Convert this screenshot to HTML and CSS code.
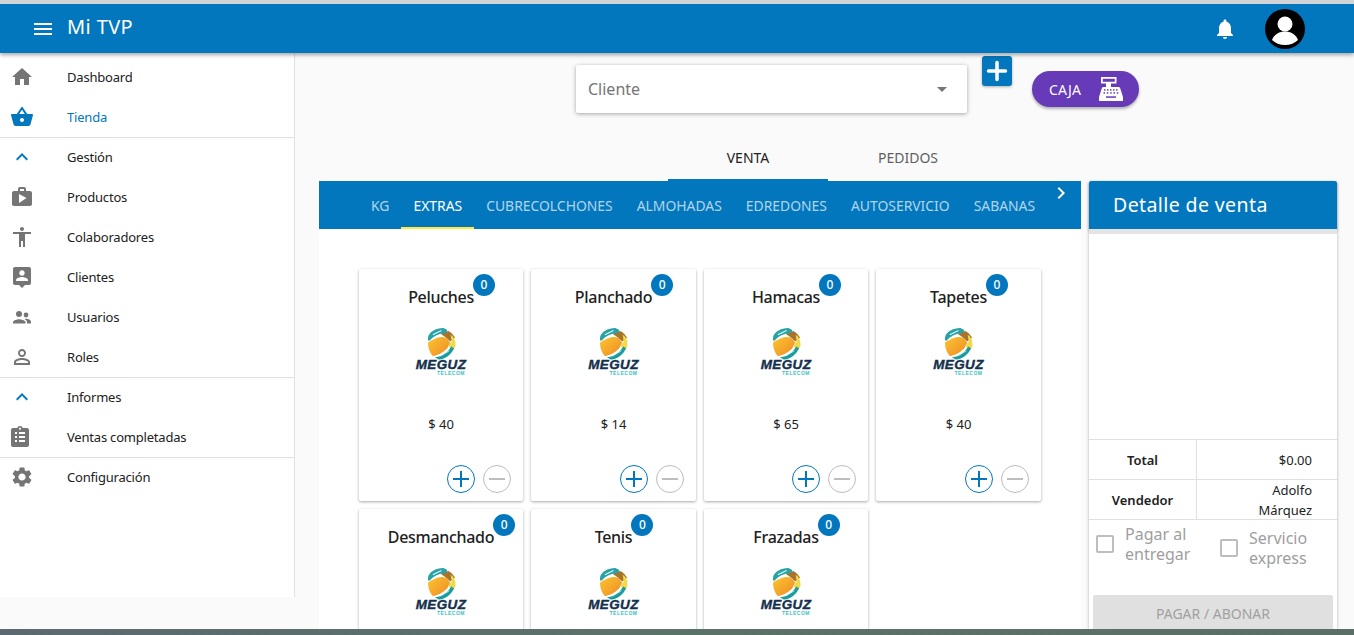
FILE: index.html
```html
<!DOCTYPE html>
<html lang="es">
<head>
<meta charset="utf-8">
<title>Mi TVP</title>
<link rel="stylesheet" href="styles.css">
</head>
<body>
<svg class="defs" width="0" height="0" aria-hidden="true">
  <defs>
    <linearGradient id="gl-orange" x1="0" y1="0" x2="1" y2="1">
      <stop offset="0" stop-color="#fbc531"/>
      <stop offset="1" stop-color="#ef8a25"/>
    </linearGradient>
  </defs>
  <symbol id="globe" viewBox="0 0 30 33">
    <path d="M1 15C8 10 15 8 20 10L24 15 21 21C15 27 9 29 6 29 3 26 1 21 1 15Z" fill="url(#gl-orange)"/>
    <path d="M14 6 22 3C26 5 28 8 29 10L24 14 20 10Z" fill="#a8742c"/>
    <path d="M24.500 7C28 9 29.500 13 29.500 17 29.500 20 27.500 23 25 24L22.500 18 25.500 14Z" fill="#f0d94a"/>
    <path d="M1 10C2 4 9 0 17 0L21 2 20 5C14 5 6 8 3 13L1 13Z" fill="#27a3a8"/>
    <path d="M6 7 15 2.500" stroke="#e4f6f6" stroke-width="1.200"/>
    <path d="M8 30C14 30 21 26 25 19L28 21C25 28 18 33 12 32.500Z" fill="#1d9c9f"/>
    <path d="M14 29 23 23.500" stroke="#cfeeee" stroke-width="1"/>
  </symbol>
</svg>
<div class="shell">
  <header class="appbar">
    <svg class="i24 white" viewBox="0 0 24 24"><path d="M3 18h18v-2H3zm0-5h18v-2H3zm0-7v2h18V6z"/></svg>
    <h1 class="brand">Mi TVP</h1>
    <div class="appbar-end">
      <svg class="i24 white" viewBox="0 0 24 24"><path d="M12 22c1.100 0 2-.9 2-2h-4c0 1.100.9 2 2 2m6-6v-5c0-3.070-1.630-5.640-4.500-6.320V4c0-.83-.67-1.500-1.500-1.500s-1.500.67-1.500 1.500v.68C7.640 5.360 6 7.920 6 11v5l-2 2v1h16v-1z"/></svg>
      <svg class="avatar" viewBox="0 0 40 40"><circle cx="20" cy="20" r="20" fill="#000"/><circle cx="20" cy="15" r="7.500" fill="#fff"/><path d="M7 31c2-6 8-8.500 13-8.500S31 25 33 31c-3 3-8 5-13 5S10 34 7 31Z" fill="#fff"/></svg>
    </div>
  </header>
  <div class="body">
    <nav class="sidebar">
      <a class="nav-item"><svg class="i24" viewBox="0 0 24 24"><path d="M10 20v-6h4v6h5v-8h3L12 3 2 12h3v8z"/></svg><span>Dashboard</span></a>
      <a class="nav-item active"><svg class="i24" viewBox="0 0 24 24"><path d="M22 9h-4.790l-4.380-6.560c-.19-.28-.51-.42-.83-.42s-.64.14-.83.43L6.790 9H2c-.55 0-1 .45-1 1 0 .09.010.18.040.27l2.540 9.270c.23.84 1 1.460 1.920 1.460h13c.92 0 1.690-.62 1.930-1.460l2.540-9.270L23 10c0-.55-.45-1-1-1M12 4.800 14.800 9H9.200zM12 17c-1.100 0-2-.9-2-2s.9-2 2-2 2 .9 2 2-.9 2-2 2"/></svg><span>Tienda</span></a>
      <a class="nav-item ruled"><svg class="i24 chev" viewBox="0 0 24 24"><path d="m12 8-6 6 1.410 1.410L12 10.830l4.590 4.580L18 14z"/></svg><span>Gestión</span></a>
      <a class="nav-item"><svg class="i24" viewBox="0 0 24 24"><path d="M20 6h-4V4c0-1.110-.89-2-2-2h-4c-1.110 0-2 .89-2 2v2H4c-1.110 0-1.990.89-1.990 2L2 19c0 1.110.89 2 2 2h16c1.110 0 2-.89 2-2V8c0-1.110-.89-2-2-2m-6 0h-4V4h4zM9 18V9l7.500 4z"/></svg><span>Productos</span></a>
      <a class="nav-item"><svg class="i24" viewBox="0 0 24 24"><path d="M12 2c1.100 0 2 .9 2 2s-.9 2-2 2-2-.9-2-2 .9-2 2-2m9 7h-6v13h-2v-6h-2v6H9V9H3V7h18z"/></svg><span>Colaboradores</span></a>
      <a class="nav-item"><svg class="i24" viewBox="0 0 24 24"><path d="M19 2H5c-1.110 0-2 .9-2 2v14c0 1.100.89 2 2 2h4l3 3 3-3h4c1.100 0 2-.9 2-2V4c0-1.100-.9-2-2-2m-7 3.300c1.490 0 2.700 1.210 2.700 2.700s-1.210 2.700-2.700 2.700S9.300 9.490 9.300 8 10.510 5.300 12 5.300M18 16H6v-.9c0-2 4-3.100 6-3.100s6 1.100 6 3.100z"/></svg><span>Clientes</span></a>
      <a class="nav-item"><svg class="i24" viewBox="0 0 24 24"><circle cx="9" cy="9" r="3"/><path d="M3 18.500v-1.200c0-1.900 4-3 6-3s6.500 1.100 6.500 3v1.200z"/><circle cx="16" cy="10" r="2.400"/><path d="M14.500 13.900c3-.4 6.500.8 6.500 2.900v1.700h-4v-1.400c0-1.300-1-2.400-2.500-3.200z"/></svg><span>Usuarios</span></a>
      <a class="nav-item"><svg class="i24" viewBox="0 0 24 24"><path d="M12 5.900c1.160 0 2.100.94 2.100 2.100s-.94 2.100-2.100 2.100S9.900 9.160 9.900 8s.94-2.100 2.100-2.100m0 9c2.970 0 6.100 1.460 6.100 2.100v1.100H5.900V17c0-.64 3.130-2.100 6.100-2.100M12 4C9.790 4 8 5.790 8 8s1.790 4 4 4 4-1.790 4-4-1.790-4-4-4m0 9c-2.670 0-8 1.340-8 4v3h16v-3c0-2.660-5.330-4-8-4"/></svg><span>Roles</span></a>
      <a class="nav-item ruled"><svg class="i24 chev" viewBox="0 0 24 24"><path d="m12 8-6 6 1.410 1.410L12 10.830l4.590 4.580L18 14z"/></svg><span>Informes</span></a>
      <a class="nav-item shifted"><svg class="i24" viewBox="0 0 24 24"><path d="M19 3h-4.180C14.400 1.840 13.300 1 12 1s-2.400.84-2.820 2H5c-1.100 0-2 .9-2 2v15c0 1.100.9 2 2 2h14c1.100 0 2-.9 2-2V5c0-1.100-.9-2-2-2m-7-.25c.55 0 1 .45 1 1s-.45 1-1 1-1-.45-1-1 .45-1 1-1M7 7h2v2H7zm0 4h2v2H7zm0 4h2v2H7zm4-8h6v2h-6zm0 4h6v2h-6zm0 4h6v2h-6z" fill-rule="evenodd"/></svg><span>Ventas completadas</span></a>
      <a class="nav-item ruled"><svg class="i24" viewBox="0 0 24 24"><path d="M19.140 12.940c.04-.3.060-.61.060-.94 0-.32-.02-.64-.07-.94l2.030-1.580c.18-.14.230-.41.120-.61l-1.920-3.320c-.12-.22-.37-.29-.59-.22l-2.390.96c-.5-.38-1.030-.7-1.620-.94l-.36-2.540c-.04-.24-.24-.41-.48-.41h-3.840c-.24 0-.43.17-.47.41l-.36 2.540c-.59.24-1.130.57-1.620.94l-2.390-.96c-.22-.08-.47 0-.59.22L2.740 8.870c-.12.21-.08.47.12.61l2.030 1.580c-.05.3-.09.63-.09.94s.02.64.07.94l-2.030 1.580c-.18.14-.23.41-.12.61l1.920 3.320c.12.22.37.29.59.22l2.390-.96c.5.38 1.030.7 1.620.94l.36 2.540c.05.24.24.41.48.41h3.840c.24 0 .44-.17.47-.41l.36-2.540c.59-.24 1.130-.56 1.620-.94l2.390.96c.22.080.47 0 .59-.22l1.920-3.320c.12-.22.070-.47-.12-.61zM12 15.600c-1.980 0-3.600-1.620-3.600-3.600s1.620-3.600 3.600-3.600 3.600 1.620 3.600 3.600-1.620 3.600-3.600 3.600"/></svg><span>Configuración</span></a>
    </nav>
    <main class="content">
      <div class="toolbar">
        <div class="client-select"><span>Cliente</span><i class="caret"></i></div>
        <button class="add-btn"><svg viewBox="0 0 30 30"><path d="M6.500 15h17M15 6.500v17"/></svg></button>
        <button class="caja-btn">CAJA
          <svg viewBox="0 0 24 24"><path fill-rule="evenodd" d="M2 0h15.500v6.500H12V10h7.500c.8 0 1.300.4 1.600 1.100L24 20v4H0v-4l2.900-8.900C3.200 10.400 3.700 10 4.500 10H7V6.500H2Zm1.800 1.700v3h12v-3Z"/><g fill="#673ab7"><rect x="5" y="12.200" width="1.500" height="1.500"/><rect x="8" y="12.200" width="1.500" height="1.500"/><rect x="11" y="12.200" width="1.500" height="1.500"/><rect x="14" y="12.200" width="1.500" height="1.500"/><rect x="17" y="12.200" width="1.500" height="1.500"/><rect x="4.500" y="15.200" width="1.500" height="1.500"/><rect x="7.800" y="15.200" width="1.500" height="1.500"/><rect x="11.200" y="15.200" width="1.500" height="1.500"/><rect x="14.500" y="15.200" width="1.500" height="1.500"/><rect x="17.800" y="15.200" width="1.500" height="1.500"/><rect x="7" y="19.300" width="10" height="1.500"/></g></svg>
        </button>
      </div>
      <div class="tabs">
        <a class="tab selected">VENTA</a>
        <a class="tab">PEDIDOS</a>
      </div>
      <div class="workspace">
        <section class="catalog">
          <div class="cats">
            <a class="cat">KG</a>
            <a class="cat current">EXTRAS</a>
            <a class="cat">CUBRECOLCHONES</a>
            <a class="cat">ALMOHADAS</a>
            <a class="cat">EDREDONES</a>
            <a class="cat">AUTOSERVICIO</a>
            <a class="cat">SABANAS</a>
            <svg class="cats-next" viewBox="0 0 24 24"><path d="M10 6 8.590 7.410 13.170 12l-4.580 4.590L10 18l6-6z"/></svg>
          </div>
          <div class="grid">
            <article class="card"><h2><span class="name">Peluches<b class="badge">0</b></span></h2><div class="logo"><svg class="globe"><use href="#globe"/></svg><span class="mz">MEGUZ</span><span class="mz-sub">TELECOM</span></div><p class="price">$ 40</p><div class="steppers"><button class="step plus"><svg viewBox="0 0 24 24"><path d="M4 12h16M12 4v16"/></svg></button><button class="step minus"><svg viewBox="0 0 24 24"><path d="M4 12h16"/></svg></button></div></article>
            <article class="card"><h2><span class="name">Planchado<b class="badge">0</b></span></h2><div class="logo"><svg class="globe"><use href="#globe"/></svg><span class="mz">MEGUZ</span><span class="mz-sub">TELECOM</span></div><p class="price">$ 14</p><div class="steppers"><button class="step plus"><svg viewBox="0 0 24 24"><path d="M4 12h16M12 4v16"/></svg></button><button class="step minus"><svg viewBox="0 0 24 24"><path d="M4 12h16"/></svg></button></div></article>
            <article class="card"><h2><span class="name">Hamacas<b class="badge">0</b></span></h2><div class="logo"><svg class="globe"><use href="#globe"/></svg><span class="mz">MEGUZ</span><span class="mz-sub">TELECOM</span></div><p class="price">$ 65</p><div class="steppers"><button class="step plus"><svg viewBox="0 0 24 24"><path d="M4 12h16M12 4v16"/></svg></button><button class="step minus"><svg viewBox="0 0 24 24"><path d="M4 12h16"/></svg></button></div></article>
            <article class="card"><h2><span class="name">Tapetes<b class="badge">0</b></span></h2><div class="logo"><svg class="globe"><use href="#globe"/></svg><span class="mz">MEGUZ</span><span class="mz-sub">TELECOM</span></div><p class="price">$ 40</p><div class="steppers"><button class="step plus"><svg viewBox="0 0 24 24"><path d="M4 12h16M12 4v16"/></svg></button><button class="step minus"><svg viewBox="0 0 24 24"><path d="M4 12h16"/></svg></button></div></article>
            <article class="card"><h2><span class="name">Desmanchado<b class="badge">0</b></span></h2><div class="logo"><svg class="globe"><use href="#globe"/></svg><span class="mz">MEGUZ</span><span class="mz-sub">TELECOM</span></div></article>
            <article class="card"><h2><span class="name">Tenis<b class="badge">0</b></span></h2><div class="logo"><svg class="globe"><use href="#globe"/></svg><span class="mz">MEGUZ</span><span class="mz-sub">TELECOM</span></div></article>
            <article class="card"><h2><span class="name">Frazadas<b class="badge">0</b></span></h2><div class="logo"><svg class="globe"><use href="#globe"/></svg><span class="mz">MEGUZ</span><span class="mz-sub">TELECOM</span></div></article>
          </div>
        </section>
        <aside class="detail">
          <h2 class="detail-head">Detalle de venta</h2>
          <div class="detail-empty"></div>
          <div class="sum-row"><div class="sum-label">Total</div><div class="sum-value">$0.00</div></div>
          <div class="sum-row"><div class="sum-label">Vendedor</div><div class="sum-value">Adolfo Márquez</div></div>
          <div class="checks">
            <label class="check first"><i class="box"></i><span>Pagar al entregar</span></label>
            <label class="check second"><i class="box"></i><span>Servicio express</span></label>
          </div>
          <button class="pay">PAGAR / ABONAR</button>
        </aside>
      </div>
    </main>
  </div>
</div>
<div class="taskbar"></div>
</body>
</html>
```
FILE: styles.css
```css
* { box-sizing: border-box; }
html, body { margin: 0; height: 635px; overflow: hidden; }
body { background: #fafafa; font-family: "Noto Sans", "Open Sans", sans-serif; color: #212121; font-size: 13px; }
.defs { position: absolute; }
.shell { height: 629px; overflow: hidden; display: flex; flex-direction: column; border-top: 4px solid #d2d3d7; }
.i24 { width: 24px; height: 24px; fill: #757575; flex: none; }
.i24.white { fill: #fff; }
.appbar { flex: none; height: 49px; background: #0277bd; color: #fff; display: flex; align-items: center; padding: 0 49px 0 31px; box-shadow: 0 2px 4px rgba(0,0,0,.35); position: relative; z-index: 2; }
.brand { margin: 0 0 5px 12px; font-size: 20px; font-weight: 400; letter-spacing: .4px; }
.appbar-end { margin-left: auto; display: flex; align-items: center; gap: 28px; }
.avatar { width: 40px; height: 40px; }
.body { flex: 1; min-height: 0; display: flex; }
.sidebar { flex: none; width: 295px; height: 544px; padding-top: 4px; background: #fff; border-right: 1px solid #e0e0e0; }
.nav-item { height: 40px; display: flex; align-items: center; padding-left: 10px; color: #212121; letter-spacing: -.2px; }
.nav-item span { margin-left: 33px; }
.nav-item.active { color: #0277bd; }
.nav-item.active .i24, .i24.chev { fill: #0277bd; }
.nav-item.ruled { border-top: 1px solid #e0e0e0; padding-bottom: 1px; }
.nav-item.shifted .i24 { margin-left: -2.500px; }
.nav-item.shifted span { margin-left: 35.500px; }
.content { flex: 1; min-width: 0; display: flex; flex-direction: column; }
.toolbar { flex: none; height: 84px; display: flex; align-items: flex-start; padding-left: 281px; position: relative; }
.client-select { margin-top: 12px; width: 391px; height: 48px; background: #fff; border-radius: 2px; box-shadow: 0 1px 4px rgba(0,0,0,.35); padding: 0 12px; display: flex; align-items: center; justify-content: space-between; font-size: 16px; color: #757575; }
.caret { border: 5px solid transparent; border-top-color: #757575; border-bottom: 0; margin-right: 8px; }
.add-btn { margin: 3px 0 0 15px; width: 30px; height: 30px; padding: 0; border: 0; border-radius: 3px; background: #0277bd; box-shadow: 0 1px 3px rgba(0,0,0,.3); display: flex; align-items: center; justify-content: center; }
.add-btn svg { width: 30px; height: 30px; fill: none; stroke: #fff; stroke-width: 3.500; stroke-linecap: round; }
.caja-btn { margin: 18px 0 0 20px; width: 107px; height: 36px; border: 0; border-radius: 18px; background: #673ab7; color: #fff; font: 14px "Noto Sans", sans-serif; letter-spacing: .2px; display: flex; align-items: center; justify-content: space-between; padding: 0 16px 0 17px; box-shadow: 0 2px 3px rgba(0,0,0,.3); }
.caja-btn svg { width: 24px; height: 24px; fill: #fff; }
.tabs { flex: none; height: 44px; display: flex; padding-left: 373px; }
.tab { width: 160px; height: 44px; padding-bottom: 4px; display: flex; align-items: center; justify-content: center; font-size: 14px; color: #616161; }
.tab.selected { color: #212121; padding-bottom: 2px; border-bottom: 2px solid #0277bd; }
.workspace { flex: 1; min-height: 0; display: flex; padding-left: 24px; }
.catalog { flex: none; width: 762px; background: #fff; overflow: hidden; }
.cats { height: 48px; background: #0277bd; display: flex; padding-left: 40px; position: relative; }
.cat { padding: 0 12px; display: flex; align-items: center; color: rgba(255,255,255,.7); font-size: 13.900px; }
.cat.current { color: #fff; border-top: 2px solid transparent; border-bottom: 2px solid #ffeb3b; }
.cats-next { position: absolute; top: 0; right: 8px; width: 24px; height: 24px; fill: #fff; }
.grid { display: grid; grid-template-columns: repeat(4, 164.500px); column-gap: 8px; row-gap: 8px; padding: 40px 0 0 39.750px; }
.card { height: 232px; background: #fff; border-radius: 2px; box-shadow: 0 1px 3px rgba(0,0,0,.35); display: flex; flex-direction: column; align-items: center; }
.card h2 { margin: 17px 0 0; font-size: 16px; font-weight: 500; line-height: 22px; letter-spacing: -.3px; }
.name { position: relative; display: inline-block; }
.badge { position: absolute; left: 100%; top: -12px; margin-left: -1px; width: 22px; height: 22px; border-radius: 50%; background: #0277bd; color: #fff; font-size: 12px; font-weight: 500; letter-spacing: 0; display: flex; align-items: center; justify-content: center; }
.logo { width: 50px; height: 48px; margin-top: 20px; display: flex; flex-direction: column; align-items: center; }
.globe { flex: none; width: 29px; height: 32px; }
.mz { margin-top: -1px; font: italic 700 13.500px/12px "Liberation Sans", sans-serif; color: #14304d; letter-spacing: .4px; -webkit-text-stroke: .4px #14304d; }
.mz-sub { align-self: flex-end; margin: 0 1px 0 0; font: 700 5px/5px "Liberation Sans", sans-serif; color: #39c1c4; letter-spacing: .5px; }
.price { margin: 38px 0 0; font-size: 13px; line-height: 20px; }
.steppers { margin-top: auto; margin-bottom: 8px; align-self: flex-end; display: flex; gap: 8px; padding-right: 12px; }
.step { width: 28px; height: 28px; padding: 0; border-radius: 50%; background: #fff; border: 1px solid #0277bd; display: flex; align-items: center; justify-content: center; }
.step svg { width: 24px; height: 24px; fill: none; stroke: #0277bd; stroke-width: 2; }
.step.minus { border-color: #bdbdbd; }
.step.minus svg { stroke: #bdbdbd; }
.detail { flex: none; width: 248px; margin-left: 8px; background: #fff; box-shadow: 0 1px 3px rgba(0,0,0,.3); display: flex; flex-direction: column; }
.detail-head { margin: 0; flex: none; height: 48px; background: #0277bd; color: #fff; font-size: 19.500px; font-weight: 400; letter-spacing: .4px; padding: 0 24px 1px; border-radius: 2px 2px 0 0; display: flex; align-items: center; box-shadow: 0 2px 3px rgba(0,0,0,.3); }
.detail-empty { flex: none; height: 210px; border-top: 5px solid #e4e4e4; }
.sum-row { flex: none; height: 40px; display: grid; grid-template-columns: 108px 1fr; border-top: 1px solid #e0e0e0; font-size: 13px; }
.sum-label { display: flex; align-items: center; justify-content: center; font-weight: 600; border-right: 1px solid #e0e0e0; }
.sum-value { display: flex; align-items: center; justify-content: flex-end; text-align: right; padding: 0 25px 0 50px; line-height: 20px; }
.checks { flex: none; height: 76px; border-top: 1px solid #e0e0e0; display: grid; grid-template-columns: 124px 1fr; color: #9e9e9e; font-size: 16px; line-height: 20px; }
.check { display: flex; gap: 11px; padding: 6px 0 0 7px; }
.check.second { padding-top: 10px; }
.check span { width: 78px; margin-top: -2px; }
.box { flex: none; width: 18px; height: 18px; margin-top: 9px; border: 2px solid #bdbdbd; border-radius: 2px; }
.pay { flex: none; margin: 0 4px; height: 36px; border: 0; border-radius: 2px; background: #e0e0e0; color: #a0a0a0; font: 14px "Noto Sans", sans-serif; }
.taskbar { height: 6px; background: linear-gradient(90deg, #5d6970, #5b7269 50%, #5c6f66); }
```
